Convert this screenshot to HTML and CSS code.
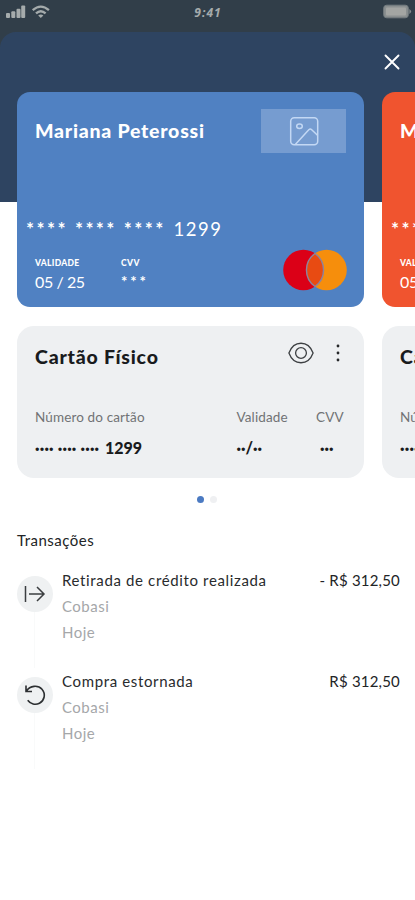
FILE: index.html
```html
<!DOCTYPE html>
<html lang="pt-BR">
<head>
<meta charset="utf-8">
<title>Cartões</title>
<link rel="stylesheet" href="styles.css">
</head>
<body>
<div class="status">
  <svg class="signal" width="46" height="18" viewBox="0 0 46 18">
    <g fill="#a5abac"><rect x="0" y="9" width="4" height="5" rx="1"/><rect x="5.3" y="7.2" width="4" height="6.8" rx="1"/><rect x="10.5" y="4.7" width="4" height="9.3" rx="1"/><rect x="15.2" y="1.5" width="4" height="12.5" rx="1"/></g>
    <g fill="none" stroke="#a5abac" stroke-width="2.3"><path d="M26.7 6.2Q34.8-1 42.9 6.2"/><path d="M30 9.4Q34.8 5 39.6 9.4"/></g>
    <path d="M32.2 11.4Q34.8 9.4 37.4 11.4L34.8 14Z" fill="#a5abac"/>
  </svg>
  <span class="clock">9:41</span>
  <svg class="battery" width="29" height="16" viewBox="0 0 29 16">
    <rect x=".7" y="1.2" width="24.6" height="12.6" rx="3" fill="#8a8f90" stroke="#757d81"/>
    <rect x="3" y="3.5" width="20" height="8" rx="1" fill="#a3a5a3"/>
    <path d="M26.3 5Q30 7.5 26.3 10Z" fill="#858b8d"/>
  </svg>
</div>
<main class="sheet">
  <header class="top">
    <svg width="16" height="16" viewBox="0 0 16 16"><path d="M1.5 1.5l13 13M14.5 1.5l-13 13" stroke="#fff" stroke-width="1.9" stroke-linecap="round"/></svg>
  </header>
  <section class="slider">
    <article class="slide">
      <div class="card blue">
        <div class="card-head">
          <h2>Mariana Peterossi</h2>
          <div class="logo">
            <svg width="30" height="30" viewBox="0 0 30 30" fill="none" stroke="#c3d8f4" stroke-width="1.5" stroke-linejoin="round"><rect x="1.7" y="1.7" width="27" height="27" rx="3.5"/><ellipse cx="10.5" cy="10.3" rx="2.8" ry="2.2"/><path d="M6.3 28.5L19.8 13.7Q21.3 12.3 22.7 13.7L28.5 19.3"/></svg>
          </div>
        </div>
        <div class="number"><span class="stars">**** **** ****</span><span class="last">1299</span></div>
        <div class="details">
          <div class="valid"><small>VALIDADE</small><b>05 / 25</b></div>
          <div class="code"><small>CVV</small><b class="mask">***</b></div>
          <svg class="brand" width="66" height="42" viewBox="0 0 66 42"><circle cx="21.4" cy="21" r="20.2" fill="#db0017"/><circle cx="44.6" cy="21" r="20.2" fill="#f68e0c"/><path d="M33 4.5A20.2 20.2 0 0 1 33 37.5A20.2 20.2 0 0 1 33 4.5Z" fill="#e84b12" stroke="#8b83a0" stroke-width="1.4"/></svg>
        </div>
      </div>
      <div class="info">
        <div class="info-head">
          <h3>Cartão Físico</h3>
          <svg class="eye" width="26" height="22" viewBox="0 0 26 22" fill="none" stroke="#3d4043" stroke-width="1.3"><path d="M.9 11C5.8-2 20.2-2 25.1 11C20.2 24 5.8 24 .9 11Z"/><circle cx="13" cy="11" r="5.4"/></svg>
          <svg class="more" width="4" height="18" viewBox="0 0 4 18" fill="#26282a"><circle cx="2" cy="2" r="1.4"/><circle cx="2" cy="9" r="1.4"/><circle cx="2" cy="16" r="1.4"/></svg>
        </div>
        <div class="fields">
          <div class="f-num"><span class="label">Número do cartão</span><span class="value"><i class="dots long">···· ···· ····</i>1299</span></div>
          <div class="f-val"><span class="label">Validade</span><span class="value"><i class="dots">··</i>/<i class="dots">··</i></span></div>
          <div class="f-cvv"><span class="label">CVV</span><span class="value"><i class="dots">···</i></span></div>
        </div>
      </div>
    </article>
    <article class="slide">
      <div class="card orange">
        <div class="card-head"><h2>Mariana Peterossi</h2></div>
        <div class="number"><span class="stars">**** **** ****</span><span class="last">1299</span></div>
        <div class="details">
          <div class="valid"><small>VALIDADE</small><b>05 / 25</b></div>
        </div>
      </div>
      <div class="info">
        <div class="info-head"><h3>Cartão Físico</h3></div>
        <div class="fields">
          <div class="f-num"><span class="label">Número do cartão</span><span class="value"><i class="dots long">···· ···· ····</i>1299</span></div>
        </div>
      </div>
    </article>
  </section>
  <div class="pager"><span class="on"></span><span></span></div>
  <section class="history">
    <h4>Transações</h4>
    <div class="item">
      <div class="rail"><div class="round"><svg width="22" height="18" viewBox="0 0 22 18" fill="none" stroke="#3b3e40" stroke-width="1.5"><path d="M1.5 1v16M5 9h15M13 2l7 7-7 7"/></svg></div></div>
      <div class="text"><p class="title">Retirada de crédito realizada</p><p>Cobasi</p><p>Hoje</p></div>
      <div class="amount">- R$ 312,50</div>
    </div>
    <div class="item">
      <div class="rail"><div class="round"><svg width="22" height="22" viewBox="0 0 22 22" fill="none" stroke="#2c2f31" stroke-width="1.6"><path d="M2 1.5v6h6M2.5 7C6 1.5 14 .7 18 5.3C22 10 20.5 16.5 15.5 19.2C11.5 21.3 6.5 20.2 3.7 16.3"/></svg></div></div>
      <div class="text"><p class="title">Compra estornada</p><p>Cobasi</p><p>Hoje</p></div>
      <div class="amount">R$ 312,50</div>
    </div>
  </section>
</main>
</body>
</html>
```
FILE: styles.css
```css
* { box-sizing: border-box; }
body {
  margin: 0;
  width: 415px;
  height: 900px;
  overflow: hidden;
  background: linear-gradient(#313e49 60px, #fff 60px);
  font-family: Lato, "Liberation Sans", sans-serif;
  color: #222426;
}
h2, h3, h4, p { margin: 0; }
svg { display: block; flex: none; }
.status {
  height: 32px;
  padding: 4px 3px 0 6px;
  display: flex;
  align-items: flex-start;
  justify-content: space-between;
}
.clock {
  margin-right: 19px;
  flex: 1;
  text-align: center;
  font: italic 700 12px/17px "Open Sans", sans-serif;
  letter-spacing: 1.1px;
  color: #a5abac;
}
.sheet {
  height: 868px;
  border-radius: 16px 16px 0 0;
  background: linear-gradient(#2e4461 170px, #fff 170px);
}
.top {
  height: 60px;
  padding: 22px 15px 0 0;
  display: flex;
  justify-content: flex-end;
}
.slider {
  display: flex;
  gap: 18px;
  padding-left: 17px;
  overflow: hidden;
}
.slide { flex: none; width: 347px; }
.card {
  height: 215px;
  border-radius: 13px;
  color: #fff;
  white-space: nowrap;
}
.blue { background: #5081c2; }
.orange { background: #f0542f; }
.card-head {
  height: 62px;
  padding: 17px 18px 0;
  display: flex;
  justify-content: space-between;
}
h2 { font-size: 19.5px; line-height: 44px; font-weight: 900; letter-spacing: .75px; }
.logo {
  width: 85px;
  height: 44px;
  background: #769cd0;
  display: flex;
  align-items: center;
  justify-content: center;
}
.number {
  margin-top: 62px;
  height: 26px;
  padding-left: 9px;
  display: flex;
  font-size: 19px;
  line-height: 26px;
}
.stars { width: 147.5px; letter-spacing: 2.4px; font-weight: 700; }
.last { font-size: 18.5px; letter-spacing: 1.5px; }
.details { display: flex; padding: 7px 16.5px 0 18px; }
.details small {
  display: block;
  height: 12px;
  font-size: 8.5px;
  line-height: 12px;
  font-weight: 900;
  letter-spacing: .3px;
}
.code small { letter-spacing: .5px; }
.details b { display: block; font-size: 16px; line-height: 25px; font-weight: 400; letter-spacing: -.4px; }
.valid { width: 86px; padding-top: 8px; }
.code { padding-top: 8px; }
.details .mask { font-size: 15px; letter-spacing: 2.9px; font-weight: 700; }
.brand { margin-left: auto; }
.info {
  height: 152px;
  margin-top: 19px;
  padding: 16px 0 0 18px;
  border-radius: 17px;
  background: #eef0f2;
  white-space: nowrap;
}
.info-head { height: 58px; display: flex; }
h3 { width: 253px; font-size: 19.5px; line-height: 30px; font-weight: 900; letter-spacing: .8px; color: #191b1d; }
.more { margin: 2px 0 0 22px; }
.fields { display: flex; }
.f-num { width: 201.5px; }
.f-val { width: 79.5px; }
.label { display: block; font-size: 13.5px; line-height: 34px; letter-spacing: .13px; color: #717375; }
.value { display: block; font-size: 16px; line-height: 28px; font-weight: 900; color: #191b1d; }
.dots { font-style: normal; }
.long { display: inline-block; width: 70px; letter-spacing: .2px; }
.f-cvv .value { padding-left: 4px; }
.pager { height: 42px; padding: 18px 0 0 197px; display: flex; gap: 6px; }
.pager span { width: 7px; height: 7px; border-radius: 50%; background: #eff0f2; }
.pager .on { background: #4b7ac2; }
.history { padding: 9px 15px 0 17px; }
h4 { font-size: 15px; line-height: 22px; font-weight: 400; letter-spacing: .5px; }
.item { display: flex; height: 101px; }
h4 + .item { margin-top: 16px; }
.rail {
  width: 36px;
  margin-right: 9px;
  padding-top: 9px;
  background: linear-gradient(#f9fafa, #f9fafa) 17px 30px / 1px 71px no-repeat;
}
.round {
  height: 36px;
  border-radius: 50%;
  background: #eff1f2;
  display: flex;
  align-items: center;
  justify-content: center;
}
.text { flex: 1; font-size: 15px; line-height: 26px; color: #a5a7a9; letter-spacing: .5px; }
.title { color: #292b2d; letter-spacing: .64px; }
.amount { font-size: 15px; line-height: 26px; letter-spacing: .2px; }
```
